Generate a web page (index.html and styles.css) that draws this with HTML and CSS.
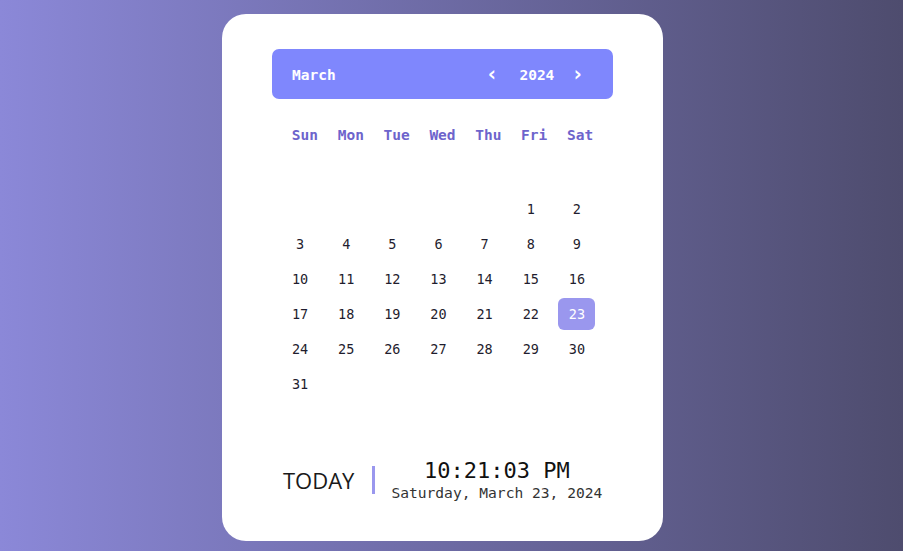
FILE: index.html
```html
<!DOCTYPE html>
<html>
<head>
<meta charset="utf-8">
<link rel="stylesheet" href="styles.css">
</head>
<body>
<div class="card">
  <div class="header">
    <span class="month">March</span>
    <div class="year-nav">
      <span class="arrow prev">&lsaquo;</span>
      <span class="year">2024</span>
      <span class="arrow next">&rsaquo;</span>
    </div>
  </div>
  <div class="weekdays">
    <span>Sun</span><span>Mon</span><span>Tue</span><span>Wed</span><span>Thu</span><span>Fri</span><span>Sat</span>
  </div>
  <div class="days">
    <span></span><span></span><span></span><span></span><span></span><span>1</span><span>2</span>
    <span>3</span><span>4</span><span>5</span><span>6</span><span>7</span><span>8</span><span>9</span>
    <span>10</span><span>11</span><span>12</span><span>13</span><span>14</span><span>15</span><span>16</span>
    <span>17</span><span>18</span><span>19</span><span>20</span><span>21</span><span>22</span><span class="active">23</span>
    <span>24</span><span>25</span><span>26</span><span>27</span><span>28</span><span>29</span><span>30</span>
    <span>31</span>
  </div>
  <div class="today">
    <span class="today-label">TODAY</span>
    <span class="divider"></span>
    <div class="clock">
      <div class="time">10:21:03 PM</div>
      <div class="date">Saturday, March 23, 2024</div>
    </div>
  </div>
</div>
</body>
</html>
```
FILE: styles.css
```css
html, body {
  margin: 0;
  padding: 0;
  height: 100%;
}
body {
  background: linear-gradient(to right, #8b88d8, #4e4c6e);
  font-family: "DejaVu Sans Mono", monospace;
  display: flex;
  align-items: flex-start;
  padding: 14px 0 0 222px;
  box-sizing: border-box;
}
.card {
  width: 441px;
  height: 527px;
  box-sizing: border-box;
  background: #fff;
  border-radius: 24px;
  padding: 35px 50px;
  display: flex;
  flex-direction: column;
}
.header {
  height: 50px;
  box-sizing: border-box;
  padding: 2px 29px 0 20px;
  background: #7f87fd;
  border-radius: 7px;
  display: flex;
  align-items: center;
  justify-content: space-between;
  color: #fff;
  font-weight: bold;
  font-size: 14.5px;
}
.year-nav {
  display: flex;
  align-items: center;
}
.arrow {
  font-size: 21px;
  line-height: 20px;
  position: relative;
  top: -1px;
}
.arrow.prev {
  margin-right: 21px;
}
.arrow.next {
  margin-left: 17px;
}
.weekdays, .days {
  display: grid;
  grid-template-columns: repeat(7, 1fr);
}
.weekdays {
  padding: 0 10px;
  margin-top: 20px;
  color: #6d64cc;
  font-weight: bold;
  font-size: 14.5px;
}
.weekdays span {
  height: 32px;
  display: flex;
  align-items: center;
  justify-content: center;
}
.days {
  padding: 0 13px 0 5px;
  margin-top: 42px;
  row-gap: 3px;
  font-size: 13.5px;
  color: #1f1d2e;
}
.days span {
  height: 32px;
  width: 37px;
  justify-self: center;
  display: flex;
  align-items: center;
  justify-content: center;
  border-radius: 6px;
}
.days span.active {
  background: #9a97ee;
  color: #fff;
}
.today {
  margin-top: 58px;
  display: flex;
  align-items: center;
  padding-left: 11px;
}
.today-label {
  font-family: "Open Sans", sans-serif;
  font-size: 22px;
  color: #1a1a1a;
  margin-right: 18px;
}
.divider {
  width: 3px;
  height: 28px;
  background: #9a97ee;
  margin-right: 16px;
}
.clock {
  text-align: center;
}
.time {
  font-size: 22px;
  line-height: 26px;
  color: #111;
}
.date {
  font-size: 14.6px;
  line-height: 18px;
  color: #333;
}
```
